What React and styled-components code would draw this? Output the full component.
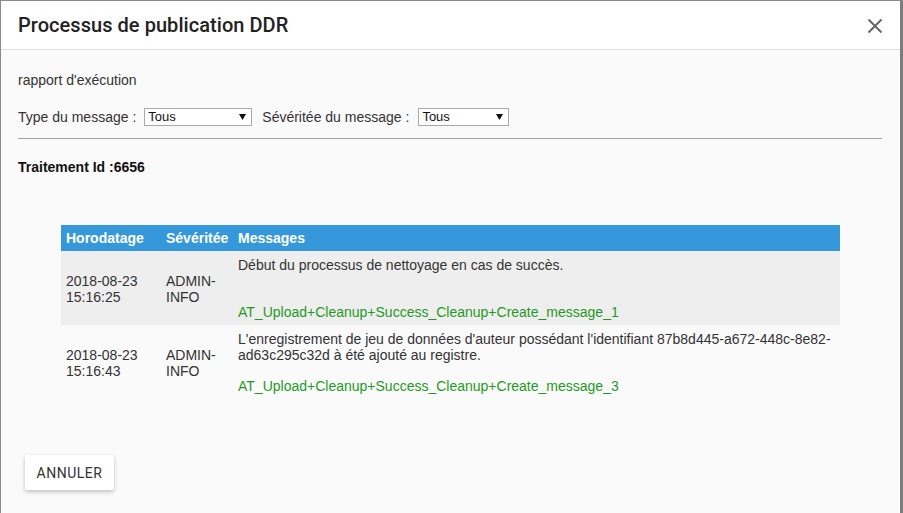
import React from "react";
import styled, { createGlobalStyle } from "styled-components";

const Global = createGlobalStyle`
  html, body { margin: 0; padding: 0; background: #fafafa; }
  body { font-family: "Liberation Sans", Arial, sans-serif; color: #333; }
  * { box-sizing: border-box; }
`;

const Dialog = styled.div`
  width: 903px;
  height: 513px;
  border-top: 1px solid #8a8a8a;
  border-left: 1px solid #8a8a8a;
  border-right: 3px solid #7d7d7d;
  background: #fafafa;
  display: flex;
  flex-direction: column;
  overflow: hidden;
`;

const Header = styled.div`
  height: 49px;
  background: #fff;
  border-bottom: 1px solid #e0e0e0;
  display: flex;
  align-items: center;
  justify-content: space-between;
  padding: 0 16px 0 17px;
`;

const Title = styled.h2`
  margin: 0;
  font-family: Roboto, "Liberation Sans", sans-serif;
  font-weight: 500;
  font-size: 20px;
  color: #222;
  letter-spacing: 0.05px;
`;

const CloseButton = styled.button`
  border: none;
  background: transparent;
  padding: 0;
  width: 18px;
  height: 18px;
  display: flex;
  align-items: center;
  justify-content: center;
  cursor: pointer;
  margin-top: 1px;
`;

const Body = styled.div`
  padding: 22px 18px 0 17px;
  font-size: 14px;
`;

const Text = styled.div`
  line-height: 16px;
  font-weight: ${(p) => (p.$bold ? 700 : 400)};
  color: ${(p) => (p.$bold ? "#111" : "#333")};
`;

const FilterRow = styled.div`
  display: flex;
  align-items: center;
  margin-top: 20px;
  height: 18px;
`;

const Label = styled.label`
  line-height: 16px;
  color: #333;
  margin-right: ${(p) => p.$mr || 8}px;
`;

const SelectWrap = styled.div`
  position: relative;
  width: ${(p) => p.$w}px;
  height: 18px;
  margin-right: ${(p) => p.$mr || 0}px;
`;

const Select = styled.select`
  appearance: none;
  -webkit-appearance: none;
  width: 100%;
  height: 18px;
  border: 1px solid #a9a9a9;
  border-radius: 0;
  background: #fff;
  font-family: "Liberation Sans", Arial, sans-serif;
  font-size: 13px;
  color: #111;
  padding: 0 0 0 3px;
  line-height: 16px;
  outline: none;
`;

const Arrow = styled.svg`
  position: absolute;
  right: 6px;
  top: 6px;
  pointer-events: none;
`;

const Rule = styled.hr`
  border: none;
  border-top: 1px solid #a0a0a0;
  margin: 12px 0 0 0;
  height: 0;
`;

const TraitementLine = styled(Text)`
  margin-top: 20px;
`;

const Table = styled.table`
  margin: 50px 0 0 43px;
  width: 779px;
  table-layout: fixed;
  border-collapse: collapse;
  font-size: 14px;
`;

const Th = styled.th`
  background: #3498db;
  color: #fff;
  font-weight: 700;
  text-align: left;
  height: 26px;
  padding: 0 5px;
  line-height: 16px;
`;

const Tr = styled.tr`
  background: ${(p) => (p.$shaded ? "#eeeeee" : "transparent")};
`;

const Td = styled.td`
  vertical-align: ${(p) => (p.$top ? "top" : "middle")};
  padding: 6px 5px 5px 5px;
  line-height: 16px;
  color: #333;
`;

const MsgLine = styled.div`
  min-height: 16px;
  color: #333;
`;

const Code = styled.div`
  margin-top: 15px;
  color: #1f9a1f;
`;

const Footer = styled.div`
  padding: 56px 0 0 24px;
`;

const Button = styled.button`
  width: 89px;
  height: 35px;
  border: none;
  border-radius: 2px;
  background: #fff;
  box-shadow: 0 2px 4px rgba(0, 0, 0, 0.22), 0 0 1px rgba(0, 0, 0, 0.08);
  font-family: Roboto, "Liberation Sans", sans-serif;
  font-size: 14px;
  letter-spacing: 0.5px;
  color: #333;
  text-transform: uppercase;
  cursor: pointer;
`;

const rows = [
  {
    date: "2018-08-23 15:16:25",
    sev: "ADMIN-INFO",
    lines: ["Début du processus de nettoyage en cas de succès.", ""],
    code: "AT_Upload+Cleanup+Success_Cleanup+Create_message_1",
  },
  {
    date: "2018-08-23 15:16:43",
    sev: "ADMIN-INFO",
    lines: [
      "L'enregistrement de jeu de données d'auteur possédant l'identifiant 87b8d445-a672-448c-8e82-ad63c295c32d à été ajouté au registre.",
    ],
    code: "AT_Upload+Cleanup+Success_Cleanup+Create_message_3",
  },
];

const ArrowIcon = () => (
  <Arrow width="7" height="6" viewBox="0 0 7 6">
    <path d="M0 0 H7 L3.5 6 Z" fill="#111" />
  </Arrow>
);

export default function App() {
  return (
    <>
      <Global />
      <Dialog>
        <Header>
          <Title>Processus de publication DDR</Title>
          <CloseButton aria-label="Fermer">
            <svg width="16" height="16" viewBox="0 0 16 16">
              <path d="M1.5 1.5 L14.5 14.5 M14.5 1.5 L1.5 14.5" stroke="#666" strokeWidth="2" />
            </svg>
          </CloseButton>
        </Header>
        <Body>
          <Text>rapport d'exécution</Text>
          <FilterRow>
            <Label>Type du message :</Label>
            <SelectWrap $w={108} $mr={10}>
              <Select defaultValue="Tous">
                <option>Tous</option>
              </Select>
              <ArrowIcon />
            </SelectWrap>
            <Label $mr={9}>Sévéritée du message :</Label>
            <SelectWrap $w={91}>
              <Select defaultValue="Tous">
                <option>Tous</option>
              </Select>
              <ArrowIcon />
            </SelectWrap>
          </FilterRow>
          <Rule />
          <TraitementLine $bold>Traitement Id :6656</TraitementLine>
          <Table>
            <colgroup>
              <col style={{ width: 100 }} />
              <col style={{ width: 72 }} />
              <col />
            </colgroup>
            <thead>
              <tr>
                <Th>Horodatage</Th>
                <Th>Sévéritée</Th>
                <Th>Messages</Th>
              </tr>
            </thead>
            <tbody>
              {rows.map((r, i) => (
                <Tr key={i} $shaded={i % 2 === 0}>
                  <Td>{r.date}</Td>
                  <Td>{r.sev}</Td>
                  <Td $top>
                    {r.lines.map((l, j) => (
                      <MsgLine key={j}>{l}</MsgLine>
                    ))}
                    <Code>{r.code}</Code>
                  </Td>
                </Tr>
              ))}
            </tbody>
          </Table>
        </Body>
        <Footer>
          <Button>Annuler</Button>
        </Footer>
      </Dialog>
    </>
  );
}
